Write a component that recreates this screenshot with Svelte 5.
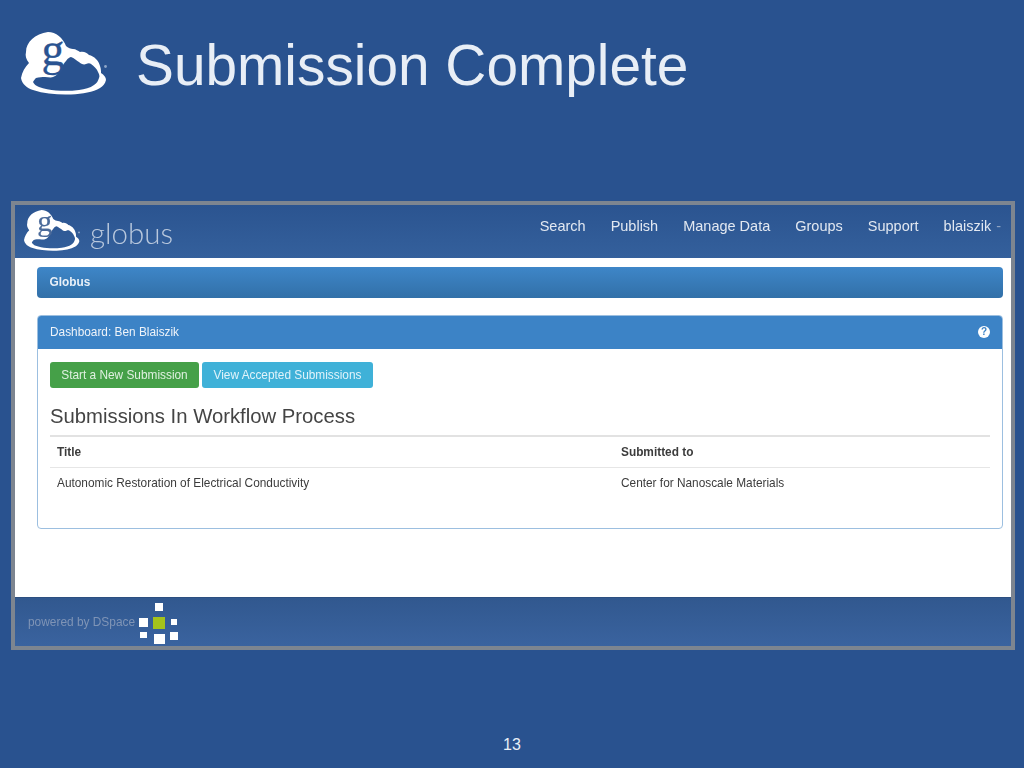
<script>
  const navItems = ["Search", "Publish", "Manage Data", "Groups", "Support"];
  // squares of the DSpace mark: x, y, w, h
  const dots = [
    [17, 0, 8, 8],
    [1, 15, 9, 9],
    [15, 14, 12, 12, "#a4c21c"],
    [33, 16, 6, 6],
    [2, 29, 7, 6],
    [16, 31, 11, 10],
    [32, 29, 8, 8],
  ];
</script>

{#snippet cloud(cls, gColor)}
  <svg class={cls} viewBox="0 0 86 63" aria-hidden="true">
    <path
      fill="#fff"
      fill-rule="evenodd"
      d="M0 46C1 40 4 35 8 31C5 27 4 24 5 20C5 10 14 2 27 0C35 0 42 6 45 14C47 16 50 17 52 17C55 17 57 19 59 20C63 19 66 21 68 23C73 24 78 29 79 34C80 37 80 39 80 41C83 43 85 45 85 48C84 52 82 54 79 56C72 60 62 62 50 62.5C38 63 24 62 12 58C6 56 1 52 0 46ZM12 50C13 48 14 47 15 46C18 45 21 45 24 45C27 45 30 46 32 45C35 44 37 42 39 39C41 35 43 31 45 29C47 26 49 25 50 25C53 26 56 29 58 30C60 32 63 33 65 32C67 31 69 31 70 32C73 34 76 37 77 40C78 42 79 44 78 46C77 49 76 51 73 53C69 56 64 57 58 58C50 59 43 59 35 58.5C29 58 23 57 18 55C15 54 13 52 12 50Z"
    />
    <circle cx="84.5" cy="34.5" r="1.4" fill="#8ea6c8" />
    <text x="32" y="33" text-anchor="middle" fill={gColor} stroke={gColor}>g</text>
  </svg>
{/snippet}

<div class="slide">
  <header class="slide-title">
    {@render cloud("logo-big", "#2a5391")}
    <h1>Submission Complete</h1>
  </header>

  <section class="shot">
    <nav class="topbar">
      <div class="brand">
        {@render cloud("logo-small", "#4a6a9a")}
        <span class="wordmark">globus</span>
      </div>
      <ul>
        {#each navItems as item}
          <li>{item}</li>
        {/each}
        <li>blaiszik<span class="caret">-</span></li>
      </ul>
    </nav>

    <main class="content">
      <div class="crumb">Globus</div>

      <div class="panel">
        <div class="panel-head">
          <span>Dashboard: Ben Blaiszik</span>
          <span class="help">?</span>
        </div>
        <div class="panel-body">
          <div class="buttons">
            <span class="btn green">Start a New Submission</span>
            <span class="btn teal">View Accepted Submissions</span>
          </div>
          <h2>Submissions In Workflow Process</h2>
          <table>
            <thead>
              <tr><th>Title</th><th>Submitted to</th></tr>
            </thead>
            <tbody>
              <tr>
                <td>Autonomic Restoration of Electrical Conductivity</td>
                <td>Center for Nanoscale Materials</td>
              </tr>
            </tbody>
          </table>
        </div>
      </div>
    </main>

    <footer class="foot">
      <span>powered by DSpace</span>
      <svg class="dspace" viewBox="0 0 41 41" aria-hidden="true">
        {#each dots as [x, y, w, h, fill]}
          <rect {x} {y} width={w} height={h} fill={fill ?? "#fff"} />
        {/each}
      </svg>
    </footer>
  </section>

  <div class="page-no">13</div>
</div>

<style>
  :global(body) {
    background: #29528f;
  }
  .slide {
    width: 1024px;
    height: 768px;
    background: #29528f;
    display: flex;
    flex-direction: column;
    font-family: "Liberation Sans", Arial, sans-serif;
    overflow: hidden;
  }
  .slide-title {
    display: flex;
    align-items: flex-start;
    gap: 29px;
    height: 201px;
    padding: 32px 0 0 21px;
    box-sizing: border-box;
  }
  svg {
    overflow: visible;
  }
  .logo-big {
    width: 86px;
    height: 63px;
    flex: none;
  }
  .logo-big text,
  .logo-small text {
    font-family: "Liberation Serif", serif;
    font-size: 46px;
    stroke-width: 0.3px;
  }
  h1 {
    margin: 1px 0 0;
    font-size: 56.8px;
    font-weight: 400;
    line-height: 66px;
    color: #e8eef6;
  }
  .shot {
    margin-left: 11px;
    width: 1004px;
    height: 449px;
    box-sizing: border-box;
    border: 4px solid #7d8590;
    display: flex;
    flex-direction: column;
    background: #fff;
    filter: blur(0.3px);
  }
  .topbar {
    height: 53px;
    flex: none;
    display: flex;
    justify-content: space-between;
    background: linear-gradient(#2b5490, #34609c);
    color: #e2e8f1;
  }
  .brand {
    display: flex;
    align-items: flex-start;
    padding: 5px 0 0 9px;
    gap: 10px;
  }
  .logo-small {
    width: 56px;
    height: 41px;
    flex: none;
  }
  .wordmark {
    font-family: Lato, sans-serif;
    font-weight: 300;
    font-size: 29.5px;
    line-height: 46px;
    color: #b9c8dd;
  }
  .topbar ul {
    list-style: none;
    margin: 0;
    padding: 12px 10px 0 0;
    display: flex;
    gap: 25px;
    font-size: 14.5px;
    line-height: 18px;
  }
  .caret {
    margin-left: 5px;
    color: #8fa3c2;
    font-size: 14.5px;
  }
  .content {
    flex: 1;
    padding: 9px 8px 0 22px;
    color: #3c3c3c;
    font-size: 11.85px;
  }
  .crumb {
    height: 31px;
    box-sizing: border-box;
    padding-left: 12.5px;
    line-height: 30px;
    border-radius: 4px;
    background: linear-gradient(#3e86c8, #3270a8);
    color: #e9f0f8;
    font-weight: bold;
  }
  .panel {
    margin-top: 17px;
    height: 214px;
    box-sizing: border-box;
    border: 1px solid #9cbfe0;
    border-radius: 4px;
    overflow: hidden;
  }
  .panel-head {
    height: 34px;
    margin: -1px -1px 0;
    padding: 0 13px;
    display: flex;
    justify-content: space-between;
    align-items: center;
    background: #3c83c6;
    color: #eef3f9;
  }
  .help {
    width: 12px;
    height: 12px;
    border-radius: 50%;
    background: #fff;
    color: #3c83c6;
    font-size: 10px;
    font-weight: bold;
    line-height: 12px;
    text-align: center;
  }
  .panel-body {
    padding: 13px 12px 0;
  }
  .buttons {
    display: flex;
    gap: 3px;
  }
  .btn {
    height: 26px;
    line-height: 26px;
    border-radius: 3px;
    color: #dff0e0;
    text-align: center;
  }
  .green {
    width: 149px;
    background: #45a048;
  }
  .teal {
    width: 171px;
    background: #3fb1d8;
    color: #e0f3fa;
  }
  h2 {
    margin: 16px 0 0;
    font-size: 20.3px;
    font-weight: 400;
    line-height: 24px;
    color: #444;
  }
  table {
    width: 100%;
    margin-top: 7px;
    border-collapse: collapse;
    border-top: 2px solid #e2e2e2;
    table-layout: fixed;
  }
  th,
  td {
    padding: 0 7px;
    text-align: left;
    height: 30px;
  }
  th:first-child {
    width: 564px;
    box-sizing: border-box;
  }
  th {
    border-bottom: 1px solid #e6e6e6;
  }
  .foot {
    height: 49px;
    flex: none;
    display: flex;
    align-items: center;
    gap: 3px;
    padding-left: 13px;
    border-top: 1px solid #2c4f80;
    box-sizing: border-box;
    background: linear-gradient(#31588f, #3a639f);
    color: #7f94b6;
    font-size: 11.9px;
  }
  .foot span {
    padding-bottom: 1px;
  }
  .dspace {
    width: 41px;
    height: 41px;
    margin-top: 2px;
  }
  .page-no {
    margin-top: 86px;
    text-align: center;
    color: #e8eef6;
    font-size: 16px;
    line-height: 18px;
  }
</style>
